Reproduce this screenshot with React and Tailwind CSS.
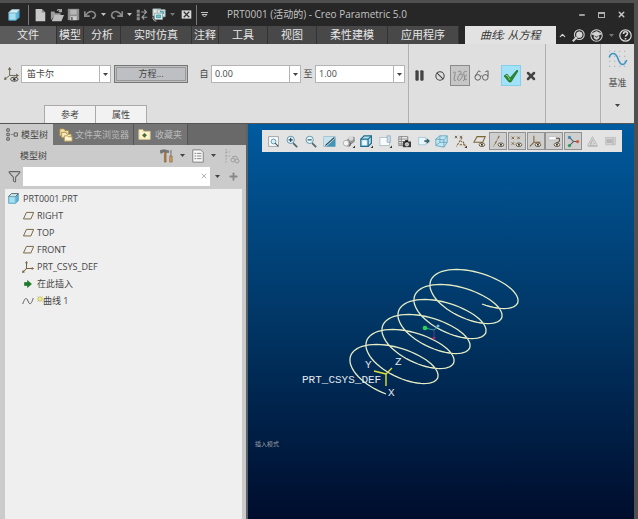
import { useState } from "react";
import { ChevronUp, Minus, X, Pause, Ban, Funnel, Plus } from "lucide-react";

// ---------- icons ----------

function Icon({ size = 16, className = "", children }) {
  return (
    <svg
      width={size}
      height={size}
      viewBox="0 0 16 16"
      fill="none"
      stroke="currentColor"
      strokeWidth="1"
      className={`shrink-0 ${className}`}
      aria-hidden="true"
    >
      {children}
    </svg>
  );
}

const Caret = ({ className = "" }) => (
  <svg width="5" height="3" viewBox="0 0 5 3" className={`shrink-0 ${className}`} aria-hidden="true">
    <path d="M0 0h5L2.5 3z" fill="currentColor" />
  </svg>
);

const Cube = ({ size = 12 }) => (
  <Icon size={size}>
    <path d="M1 5l4-4h10v10l-4 4H1z" fill="#5fb4d3" stroke="#3a8fb3" />
    <path d="M1 5l4-4h10l-4 4z" fill="#d4f2fa" />
    <path d="M1.500 5.500h9v9h-9z" fill="#a5dff0" stroke="#79bfd6" />
  </Icon>
);

const NewFile = () => (
  <Icon size={14}>
    <path d="M3 1h7l4 4v10H3z" fill="#c9c9c9" stroke="none" />
    <path d="M10 1l4 4h-4z" fill="#8d8d8d" stroke="none" />
  </Icon>
);

const OpenFolder = () => (
  <Icon size={14}>
    <path d="M1 14V4h4l1 2h6v3H5z" fill="#9b9b9b" stroke="none" />
    <path d="M5 8h11l-3 7H2z" fill="#bdbdbd" stroke="none" />
    <path d="M8 3c2-2 4-1 5 1M13 1v3h-3" stroke="#a8a8a8" strokeWidth="1.500" />
  </Icon>
);

const Save = () => (
  <Icon size={13}>
    <path d="M1 1h14v14H1z" fill="#8f8f8f" stroke="none" />
    <path d="M4 2h8v6H4z" fill="#b5b5b5" stroke="none" />
    <path d="M4 10h8v5H4z" fill="#cacaca" stroke="none" />
    <path d="M5 11h2v4H5z" fill="#666" stroke="none" />
  </Icon>
);

const Undo = ({ flip }) => (
  <Icon size={13} className={flip ? "-scale-x-100 text-[#8a8a8a]" : "text-[#8a8a8a]"}>
    <path d="M1 4v6h6M2 9c3-5 8-6 11-3 2 3 1 6-3 7" strokeWidth="2" />
  </Icon>
);

const Regenerate = () => (
  <Icon size={12}>
    <path d="M1 1h4v4H1zM1 6h4v4H1zM1 11h4v4H1z" fill="#8c8c8c" stroke="none" />
    <path d="M7 4h7M11 1l3 3-3 3M15 11H8M11 8l-3 3 3 3" stroke="#9b9b9b" strokeWidth="1.500" />
  </Icon>
);

const Windows = () => (
  <Icon size={14}>
    <path d="M1 1h9v8H1zM6 2h9v8H6z" fill="#dfe7e6" stroke="#9dafaf" />
    <path d="M3 6h9v7H3z" fill="#f2f6f6" stroke="#94a6a8" />
    <path d="M5 8h5v3H5zM9 4h4v3" fill="#73c3c9" stroke="#3b9ca4" />
    <path d="M1 10c0 3 1 5 4 5" stroke="#c9d1d1" />
  </Icon>
);

const CloseWindow = () => (
  <Icon size={11}>
    <path d="M1 2h14v12H1z" fill="#d8d8d8" stroke="none" />
    <path d="M4 4l8 8M12 4l-8 8" stroke="#333" strokeWidth="1.800" />
  </Icon>
);

const Equation = () => (
  <Icon size={15}>
    <path d="M6 9V2M6 9L1 13M6 9h8" stroke="#6b6348" />
    <path d="M6 0l2 3H4zM0 14l1-4 2 3zM16 9l-3 2V7z" fill="#6b6348" stroke="none" />
    <ellipse cx="11" cy="13" rx="4" ry="2.200" stroke="#444" fill="#d8d8c8" />
    <circle cx="11" cy="13" r="1.300" fill="#333" stroke="none" />
  </Icon>
);

const CurvePreview = () => (
  <Icon size={16} className="text-[#8b8b8b]">
    <path d="M1 5c2-2 3-1 2 1l-1 5c0 2 1 2 2 1" />
    <path d="M6 4c3-2 4 0 2 2s-3 5-2 6 3 0 4-3 0-4-2-2" />
    <path d="M15 4c-2-2-4 0-3 3s1 5-1 6M15 7c-2 0-3 3-2 5l2-1" />
  </Icon>
);

const Glasses = () => (
  <Icon size={15} className="text-[#5c5c5c]">
    <circle cx="4" cy="10" r="3" />
    <circle cx="12" cy="10" r="3" />
    <path d="M7 9c1-1 1-1 2 0M1 9l4-6 2 1M15 9V3l-3 1" />
  </Icon>
);

const Accept = () => (
  <Icon size={16}>
    <path d="M1 8l3-2 3 4 7-8 1 1-7 11H6z" fill="#2a8a34" stroke="#176124" strokeWidth="0.600" />
    <path d="M3 8l1-1 3 5" stroke="#8fd06b" />
  </Icon>
);

const DatumCurve = () => (
  <Icon size={20}>
    <path
      d="M1 1h14M1 5h14M1 9h14M1 13h14"
      stroke="#8aa0b0"
      strokeWidth="0.800"
      strokeDasharray="0.800 3.200"
    />
    <path d="M1 6c1-4 5-5 7 1s5 6 7 1" stroke="#3b94c4" strokeWidth="1.200" />
  </Icon>
);

const TreeTab = () => (
  <Icon size={13} className="text-[#454545]">
    <path d="M1 1h3v3H1zM1 6.500h3v3H1zM1 12h3v3H1zM10 6h4v4h-4z" />
    <path d="M6 8h3" strokeDasharray="1 1" />
  </Icon>
);

const FolderTab = () => (
  <Icon size={14}>
    <path d="M1 1h5l1 2h4v6H1z" fill="#f3e1a8" stroke="#a98f49" />
    <path d="M3 5h5l1 2h5v4H3z" fill="#f8ebbf" stroke="#a98f49" />
    <path d="M6 9h4l1 1h4v5H6z" fill="#fff5d2" stroke="#a98f49" />
  </Icon>
);

const FavoriteTab = () => (
  <Icon size={13}>
    <path d="M1 2h5l1 2h8v10H1z" fill="#fbf3cd" stroke="#d3c184" />
    <path d="M8 6l3 3-3 3-3-3z" fill="#4c6a3a" stroke="none" />
  </Icon>
);

const Tools = () => (
  <Icon size={14}>
    <path d="M0 2c3-2 6-1 10 0v2H7L5 3 1 5z" fill="#777" stroke="#555" strokeWidth="0.500" />
    <path d="M5 4h2v11H5z" fill="#b5793f" stroke="#70502c" strokeWidth="0.500" />
    <path d="M12 1h1v7h-1z" fill="#666" stroke="none" />
    <path d="M11 8h3v7h-3z" fill="#c79a5c" stroke="#70502c" strokeWidth="0.500" />
  </Icon>
);

const ListSettings = () => (
  <Icon size={14}>
    <path d="M2 1h9l3 3v11H2z" fill="#f7f7f7" stroke="#777" />
    <path d="M4 5h2M4 8h2M4 11h2M7 5h5M7 8h5M7 11h5" stroke="#777" />
  </Icon>
);

const TreeFind = () => (
  <Icon size={16} className="text-[#9d9d9d]">
    <path d="M2 1v14M2 4h4M2 8h4" strokeDasharray="1.500 1.500" />
    <circle cx="9" cy="12" r="2" />
    <circle cx="13" cy="13" r="2" />
    <path d="M8 9l4-1 2 3" />
  </Icon>
);

const Plane = () => (
  <Icon size={11}>
    <path d="M5 3.500h10.500l-4 9.500H.700z" stroke="#76643f" strokeWidth="1.400" />
  </Icon>
);

const Csys = () => (
  <Icon size={12}>
    <path d="M6 1v9M6 10l-5 5M6 10h9" stroke="#77643c" strokeWidth="1.400" />
    <path d="M6 0l2 3H4zM16 10l-3 2V8zM0 16l1-4 3 3z" fill="#77643c" stroke="none" />
  </Icon>
);

const InsertArrow = () => (
  <Icon size={8}>
    <path d="M1 5h6V1l8 7-8 7v-4H1z" fill="#177d23" stroke="#0b5a16" />
  </Icon>
);

const CurveNode = () => (
  <Icon size={12}>
    <path d="M1 12C4 3 6 3 8 8s4 6 7-4" stroke="#555" strokeWidth="1.300" />
  </Icon>
);

const Spark = () => (
  <svg width="6" height="6" viewBox="0 0 6 6" className="mb-1" aria-hidden="true">
    <path d="M3 0v6M0 3h6M.5 .5l5 5M5.500 .5l-5 5" stroke="#b0ac13" strokeWidth="0.700" />
    <path d="M2 2h2v2H2z" fill="#f4f163" />
  </svg>
);

const eye = (
  <>
    <ellipse cx="11" cy="12" rx="3.500" ry="2.200" fill="#f3efe2" stroke="#4b4332" />
    <circle cx="11" cy="12" r="1.200" fill="#33291b" stroke="none" />
  </>
);

const corner = <path d="M16 13v3h-3z" fill="#333" stroke="none" />;

// in-graphics toolbar, left to right
const VIEW_TOOLS = [
  {
    label: "重新调整",
    art: (
      <>
        <path d="M2 2h12v12H2z" fill="#fdfdfd" stroke="#8c979e" />
        <circle cx="8" cy="8" r="3" fill="#d8eef6" stroke="#4b86a0" />
        <path d="M10 10l4 4" stroke="#4b5b63" strokeWidth="1.500" />
      </>
    ),
  },
  {
    label: "放大",
    art: (
      <>
        <circle cx="7" cy="6" r="4.500" fill="#e3f4fa" stroke="#4a879f" />
        <path d="M7 3.500v5M4.500 6h5" stroke="#26414d" strokeWidth="1.300" />
        <path d="M10 10l5 5" stroke="#54636a" strokeWidth="2" />
      </>
    ),
  },
  {
    label: "缩小",
    art: (
      <>
        <circle cx="7" cy="6" r="4.500" fill="#e3f4fa" stroke="#4a879f" />
        <path d="M4.500 6h5" stroke="#26414d" strokeWidth="1.300" />
        <path d="M10 10l5 5" stroke="#54636a" strokeWidth="2" />
      </>
    ),
  },
  {
    label: "重画",
    art: (
      <>
        <path d="M1 2h14v12H1z" fill="#fff" stroke="#7da6b8" />
        <path d="M1 2h13L1 13z" fill="#c4e4f0" stroke="none" />
        <path d="M15 4v10H4z" fill="#3f96b9" stroke="none" />
        <path d="M3 13L14 3" stroke="#2c4c5a" strokeWidth="1.500" />
      </>
    ),
  },
  {
    label: "渲染选项",
    art: (
      <>
        <path d="M6 7l4-5 5 1v5l-4 3z" fill="#9c9c9c" stroke="#777" />
        <circle cx="11" cy="4" r="3" fill="#d9d9d9" stroke="none" />
        <circle cx="5" cy="10" r="3.500" fill="#f4f4f4" stroke="#a5a5a5" />
        <path d="M5 14c4 0 5-3 4-6l2 2c1 3-2 5-6 4z" fill="#686868" stroke="none" />
        {corner}
      </>
    ),
  },
  {
    label: "显示样式",
    art: (
      <>
        <path d="M1 5l4-4h9v9l-4 4H1z" fill="#b9e2ef" stroke="#226c8b" strokeWidth="1.500" />
        <path d="M1 5h9v9M10 5l4-4" stroke="#226c8b" strokeWidth="1.500" />
        <path d="M3 7h5v5H3z" fill="#f4fafc" stroke="none" />
        {corner}
      </>
    ),
  },
  {
    label: "已保存方向",
    art: (
      <>
        <path d="M1 3h12v10H1z" fill="#f8fbfc" stroke="#a9b6bc" />
        <path d="M10 1h4v8h-4z" fill="#c5dce6" stroke="#94aeba" />
        {corner}
      </>
    ),
  },
  {
    label: "视图管理器",
    art: (
      <>
        <path d="M1 2h11v11H1zM1 5h11M1 8h11M1 11h11M4 2v11" fill="#f2f2f2" stroke="#777" />
        <path d="M6 8h10v7H6z" fill="#3b3b3b" stroke="none" />
        <path d="M9 7h3v1H9z" fill="#333" />
        <circle cx="11" cy="11.500" r="2" fill="#aaa" stroke="#eee" />
      </>
    ),
  },
  {
    label: "透视图",
    art: (
      <>
        <path d="M2 3h9v9H2z" fill="#e9f6fb" stroke="#9cc7d7" />
        <path d="M9 7.500h5" stroke="#35616f" strokeWidth="2" />
        <path d="M12 4l4 3.500L12 11z" fill="#35616f" stroke="none" />
      </>
    ),
  },
  {
    label: "剖面",
    art: (
      <>
        <path d="M1 5l5-4h9v8l-4 6-10-2z" fill="#c3e5f1" stroke="#5ba3be" />
        <path d="M1 5l10 1 4-5M11 6v9M6 1v8l-5 4M6 9h9" stroke="#5ba3be" />
      </>
    ),
  },
  {
    label: "基准显示过滤器",
    art: (
      <>
        <path d="M1 1l3 3M4 1L1 4M7 1l3 3M10 1L7 4" stroke="#5f5643" />
        <path d="M10 3L3 14M9 9v-2M7 12h7M11 8l3 6" stroke="#83683a" strokeWidth="1.300" strokeDasharray="3 1" />
        {corner}
      </>
    ),
  },
  {
    label: "平面显示",
    art: (
      <>
        <path d="M5 2h10l-3 7H1z" stroke="#7d6636" strokeWidth="1.300" />
        {eye}
      </>
    ),
  },
  {
    label: "轴显示",
    on: true,
    art: (
      <>
        <path d="M9 1L2 14" stroke="#7d6636" strokeWidth="1.300" strokeDasharray="4 1 1 1" />
        {eye}
      </>
    ),
  },
  {
    label: "点显示",
    on: true,
    art: (
      <>
        <path d="M2 2l3 3M5 2L2 5M9 2l3 3M12 2L9 5M2 9l3 3M5 9l-3 3" stroke="#7d6636" strokeWidth="1.200" />
        {eye}
      </>
    ),
  },
  {
    label: "坐标系显示",
    on: true,
    art: (
      <>
        <path d="M6 1v8M6 9l-5 5M6 9h8" stroke="#7d6636" strokeWidth="1.300" />
        {eye}
      </>
    ),
  },
  {
    label: "注释显示",
    on: true,
    art: (
      <>
        <path d="M1 2h9v4H1z" fill="#fff" stroke="#bbb" />
        <path d="M10 4h4v4l-4 2" stroke="#4b4332" strokeWidth="1.200" />
        {eye}
      </>
    ),
  },
  {
    label: "旋转中心",
    on: true,
    art: (
      <>
        <path d="M3 3l5 5M3 13l5-5h6" stroke="#555" strokeWidth="1.300" />
        <circle cx="3" cy="3" r="2" fill="#3d8fb1" stroke="none" />
        <circle cx="3" cy="13" r="2" fill="#2c9a58" stroke="none" />
        <circle cx="13" cy="8" r="2" fill="#cb5a41" stroke="none" />
      </>
    ),
  },
  {
    label: "模拟",
    art: <path d="M8 2l6 11H2zM8 6l3 5H5zM5 13L9 4M3 14h11" stroke="#b1b1b1" />,
  },
  {
    label: "暂停模拟",
    art: (
      <>
        <path d="M2 3h12v9H2z" fill="#d1d1d1" stroke="#bdbdbd" />
        <path d="M4 6h5v3H4zM11 4v8" stroke="#aaa" fill="#bbb" />
      </>
    ),
  },
];

const TABS = [
  { name: "模型", pad: "px-0.5" },
  { name: "分析", pad: "px-[7px]" },
  { name: "实时仿真", pad: "px-[13px]" },
  { name: "注释", pad: "px-0.5" },
  { name: "工具", pad: "px-[13px]" },
  { name: "视图", pad: "px-[13px]" },
  { name: "柔性建模", pad: "px-[13px]" },
  { name: "应用程序", pad: "px-[13px]" },
];

const TREE = [
  { name: "RIGHT", icon: <Plane /> },
  { name: "TOP", icon: <Plane /> },
  { name: "FRONT", icon: <Plane /> },
  { name: "PRT_CSYS_DEF", icon: <Csys /> },
  { name: "在此插入", icon: <InsertArrow /> },
  { name: "曲线 1", icon: <CurveNode />, fresh: true },
];

// ---------- layout ----------

function TitleBar() {
  return (
    <header className="flex h-[23px] items-center bg-[#272727] px-2 text-[#c4c4c4]">
      <div className="flex flex-1 items-center">
        <Cube />
        <div className="ml-2 h-5 w-px bg-[#777]" />
        <button aria-label="新建" className="ml-1"><NewFile /></button>
        <button aria-label="打开" className="ml-[3px]"><OpenFolder /></button>
        <button aria-label="保存" className="ml-[3px]"><Save /></button>
        <button aria-label="撤消" className="ml-1 flex items-center gap-1"><Undo /><Caret /></button>
        <button aria-label="重做" className="ml-1 flex items-center gap-1"><Undo flip /><Caret /></button>
        <button aria-label="重新生成" className="ml-1"><Regenerate /></button>
        <button aria-label="窗口" className="ml-1 flex items-center gap-1"><Windows /><Caret className="text-[#777]" /></button>
        <button aria-label="关闭窗口" className="ml-1.5"><CloseWindow /></button>
        <div className="ml-1 h-5 w-px bg-[#777]" />
        <button aria-label="自定义" className="ml-1">
          <svg width="7" height="6" viewBox="0 0 7 6" fill="none" stroke="currentColor">
            <path d="M0 .5h7M1 2.500h5L3.500 5z" />
          </svg>
        </button>
      </div>
      <h1 className="text-[10px] whitespace-nowrap">PRT0001 (活动的) - Creo Parametric 5.0</h1>
      <div className="flex flex-1 items-center justify-end gap-3">
        <button aria-label="最小化"><Minus size={8} strokeWidth={4} /></button>
        <button aria-label="最大化" className="h-[6px] w-[7px] border border-t-2 border-[#b0b0b0]" />
        <button aria-label="关闭"><X size={9} strokeWidth={4} /></button>
      </div>
    </header>
  );
}

function RibbonTabs() {
  return (
    <nav className="flex h-[18px] items-stretch bg-[#272727] text-[11px] text-[#e6e6e6]">
      <button className="border-r border-[#333] bg-[#5b5b5b] px-[17px] leading-[18px]">文件</button>
      {TABS.map((t) => (
        <button
          key={t.name}
          className={`border-r border-[#333] bg-[#484848] leading-[18px] whitespace-nowrap ${t.pad}`}
        >
          {t.name}
        </button>
      ))}
      <button className="ml-1.5 bg-[#e2e2e2] px-[15px] leading-[18px] whitespace-nowrap text-[#333] italic">
        曲线: 从方程
      </button>
      <div className="flex flex-1 items-center justify-between pr-0.5 pl-0.5 text-[#d5d5d5]">
        <button aria-label="折叠"><ChevronUp size={9} strokeWidth={3} /></button>
        <button aria-label="搜索">
          <Icon size={13}>
            <circle cx="9" cy="7" r="6" strokeWidth="1.300" />
            <circle cx="9" cy="7" r="3.500" fill="currentColor" />
            <path d="M6 10l-5 5" strokeWidth="2.500" />
          </Icon>
        </button>
        <button aria-label="学习">
          <Icon size={13}>
            <circle cx="8" cy="8" r="7" strokeWidth="1.300" />
            <path d="M2 6l6-3 6 3-6 3zM5 9v2l3 2 3-2V9L8 11z" fill="currentColor" />
          </Icon>
        </button>
        <Caret className="text-[#777]" />
        <button aria-label="帮助">
          <Icon size={13}>
            <circle cx="8" cy="8" r="7" strokeWidth="1.500" />
            <path d="M5.500 6c0-3.500 5-3.500 5-.500 0 2-2.500 2-2.500 4M8 11v2" strokeWidth="2" />
          </Icon>
        </button>
      </div>
    </nav>
  );
}

function ValueBox({ id, label, initial }) {
  const [value, setValue] = useState(initial);
  return (
    <>
      <label htmlFor={id} className="w-3.5 text-center">{label}</label>
      <div className="flex h-[18px] w-[90px] border border-[#b4b4b4] bg-white">
        <input
          id={id}
          value={value}
          onChange={(e) => setValue(e.target.value)}
          className="w-0 flex-1 px-[3px] outline-none"
        />
        <button aria-label="选择值" className="flex w-[11px] items-center justify-center border-l border-[#b4b4b4]">
          <Caret />
        </button>
      </div>
    </>
  );
}

function Dashboard() {
  return (
    <section className="flex h-[80px] border-b border-[#555] bg-[#dfdfdf] text-[9px] text-[#444]">
      <div className="flex flex-1 flex-col justify-between pt-[21px]">
        <div className="flex items-center">
          <span className="mr-[2px] ml-1"><Equation /></span>
          <div className="relative w-[90px]">
            <select
              aria-label="坐标系类型"
              className="block h-[18px] w-full appearance-none border border-[#b4b4b4] bg-white pl-[5px]"
            >
              <option>笛卡尔</option>
              <option>柱坐标</option>
              <option>球坐标</option>
            </select>
            <span className="pointer-events-none absolute top-0 right-0 flex h-[18px] w-[12px] items-center justify-center border-l border-[#b4b4b4]">
              <Caret />
            </span>
          </div>
          <button className="mr-[9px] ml-[3px] h-[18px] w-[74px] border border-[#777] bg-[#bebfc3] leading-4 outline -outline-offset-3 outline-[#999]">
            方程...
          </button>
          <ValueBox id="from" label="自" initial="0.00" />
          <ValueBox id="to" label="至" initial="1.00" />
        </div>
        <div className="ml-11 flex">
          <button className="h-[18px] w-[52px] border border-b-0 border-[#aaa] bg-[#f2f2f2]">参考</button>
          <button className="h-[18px] w-[51px] border border-b-0 border-l-0 border-[#aaa] bg-[#f2f2f2]">属性</button>
        </div>
      </div>
      <div className="flex w-[137px] items-start border-l border-[#b0b0b0] pt-[21px] pl-1">
        <div className="flex h-[21px] items-center">
          <button aria-label="暂停" className="mr-[9px]"><Pause size={13} fill="currentColor" strokeWidth={1} /></button>
          <button aria-label="无预览" className="mr-[5px]"><Ban size={10} strokeWidth={2.5} /></button>
          <button aria-label="预览" className="flex h-[21px] w-[20px] items-center justify-center border border-[#8a8a8a] bg-[#c6c6c6]">
            <CurvePreview />
          </button>
          <button aria-label="校验" className="mr-3 ml-1"><Glasses /></button>
          <button aria-label="确定" className="flex h-[21px] w-[20px] items-center justify-center border border-[#85cfea] bg-[#a2e2f8]">
            <Accept />
          </button>
          <button aria-label="取消" className="ml-1"><X size={12} strokeWidth={5} /></button>
        </div>
      </div>
      <div className="w-[55px] border-l border-[#b0b0b0]" />
      <div className="flex w-[34px] flex-col items-center border-l border-[#b0b0b0] pt-1.5">
        <button className="flex flex-col items-center gap-1 leading-[18px]">
          <DatumCurve />
          基准
          <Caret className="mt-2" />
        </button>
      </div>
    </section>
  );
}

function ModelTree() {
  const [query, setQuery] = useState("");
  return (
    <aside className="flex w-[248px] shrink-0 flex-col border-r-2 border-[#5b6268] bg-[#cbcbcb] text-[9px] text-[#444]">
      <div className="flex h-[21px] bg-[#696969]">
        <button className="flex w-[53px] items-center gap-0.5 bg-[#cbcbcb] pl-1.5 whitespace-nowrap"><TreeTab />模型树</button>
        <button className="flex w-[81px] items-center gap-0.5 border-r border-[#555] bg-[#747474] pl-1.5 whitespace-nowrap text-[#bcbcbc]"><FolderTab />文件夹浏览器</button>
        <button className="flex w-[54px] items-center gap-1 border-r border-[#555] bg-[#747474] pl-1 whitespace-nowrap text-[#bcbcbc]"><FavoriteTab />收藏夹</button>
      </div>
      <div className="flex h-[21px] items-center pr-1.5 pl-5">
        <h2 className="flex-1">模型树</h2>
        <button aria-label="设置" className="mr-1.5 flex items-center gap-1.5"><Tools /><Caret /></button>
        <button aria-label="显示" className="mr-2 flex items-center gap-1.5"><ListSettings /><Caret /></button>
        <button aria-label="查找"><TreeFind /></button>
      </div>
      <div className="flex h-[20px] items-center pr-[7px] pl-2">
        <Funnel size={13} className="mr-0.5 shrink-0 text-[#666]" />
        <div className="flex h-[19px] flex-1 items-center bg-white pr-0.5">
          <input
            aria-label="过滤模型树"
            value={query}
            onChange={(e) => setQuery(e.target.value)}
            className="w-0 flex-1 px-1 outline-none"
          />
          <button aria-label="清除" onClick={() => setQuery("")}><X size={8} className="text-[#888]" /></button>
        </div>
        <Caret className="mr-1 ml-[5px]" />
        <button aria-label="添加" className="ml-1"><Plus size={11} strokeWidth={4} className="text-[#888]" /></button>
      </div>
      <div className="mt-[3px] mr-1 ml-[5px] flex-1 bg-[#efefef] pt-px pl-[3px]">
        <div className="flex h-[17px] items-center gap-1"><Cube size={11} />PRT0001.PRT</div>
        <ul>
          {TREE.map((node) => (
            <li key={node.name} className="flex h-[17px] items-center gap-[3px] pl-3.5">
              <span className="flex w-3 justify-center">{node.icon}</span>
              <span className="flex items-center">
                {node.fresh && <Spark />}
                {node.name}
              </span>
            </li>
          ))}
        </ul>
      </div>
    </aside>
  );
}

// six turns around the csys origin, rising along Z
function helixPath() {
  const points = [];
  for (let i = 0; i <= 360; i++) {
    const t = i / 60;
    const a = t * Math.PI * 2;
    const x = 138 + 16 * t - 40 * Math.sin(a);
    const y = 250 - 15 * t + 20 * Math.cos(a) - 11.7 * Math.sin(a);
    points.push(`${x.toFixed(1)} ${y.toFixed(1)}`);
  }
  return `M${points.join("L")}`;
}

function Graphics() {
  return (
    <main className="relative flex-1 bg-linear-to-b from-[#005b9f] via-[#013665] to-[#000d2d]">
      <div className="mt-1.5 mr-3 ml-3.5 flex h-[22px] items-center justify-between bg-[#e3e3e3] px-0.5">
        {VIEW_TOOLS.map((tool) => (
          <button
            key={tool.label}
            aria-label={tool.label}
            className={`flex h-[18px] w-[18px] items-center justify-center border ${
              tool.on ? "border-[#929292] bg-[#cfcfcf]" : "border-transparent"
            }`}
          >
            <Icon size={13}>{tool.art}</Icon>
          </button>
        ))}
      </div>
      <svg width="300" height="280" viewBox="0 0 300 280" className="absolute top-0 left-0" fill="none">
        <path d={helixPath()} stroke="#e6ecc4" strokeWidth="1.300" />
        <path d="M138 250v12M138 250l-12-3M138 250l6-6" stroke="#e2e03a" strokeWidth="1.400" />
        <path d="M177 204l9 2 5-4" stroke="#3aa6a0" />
        <circle cx="177" cy="204" r="2.300" fill="#22d455" />
        <circle cx="190" cy="202" r="1.500" fill="#6fb9e8" />
        <path d="M186 206v8" stroke="#5b3b7c" />
        <circle cx="186" cy="214" r="1.500" fill="#a02765" />
        <g fill="#e4e9ee" className="font-['Liberation_Mono',monospace] text-[11px]">
          <text x="54" y="259">PRT_CSYS_DEF</text>
          <text x="117" y="244">Y</text>
          <text x="147" y="241">Z</text>
          <text x="140" y="272">X</text>
        </g>
      </svg>
      <p className="absolute top-[315px] left-[7px] text-[6px] leading-[10px] text-[#9aa0a6]">插入模式</p>
    </main>
  );
}

export default function App() {
  return (
    <div className="flex min-h-screen flex-col border-t-3 border-r-4 border-[#4f4f4f] font-['Open_Sans','Noto_Sans_CJK_SC',sans-serif]">
      <TitleBar />
      <RibbonTabs />
      <Dashboard />
      <div className="flex flex-1">
        <ModelTree />
        <Graphics />
      </div>
    </div>
  );
}
